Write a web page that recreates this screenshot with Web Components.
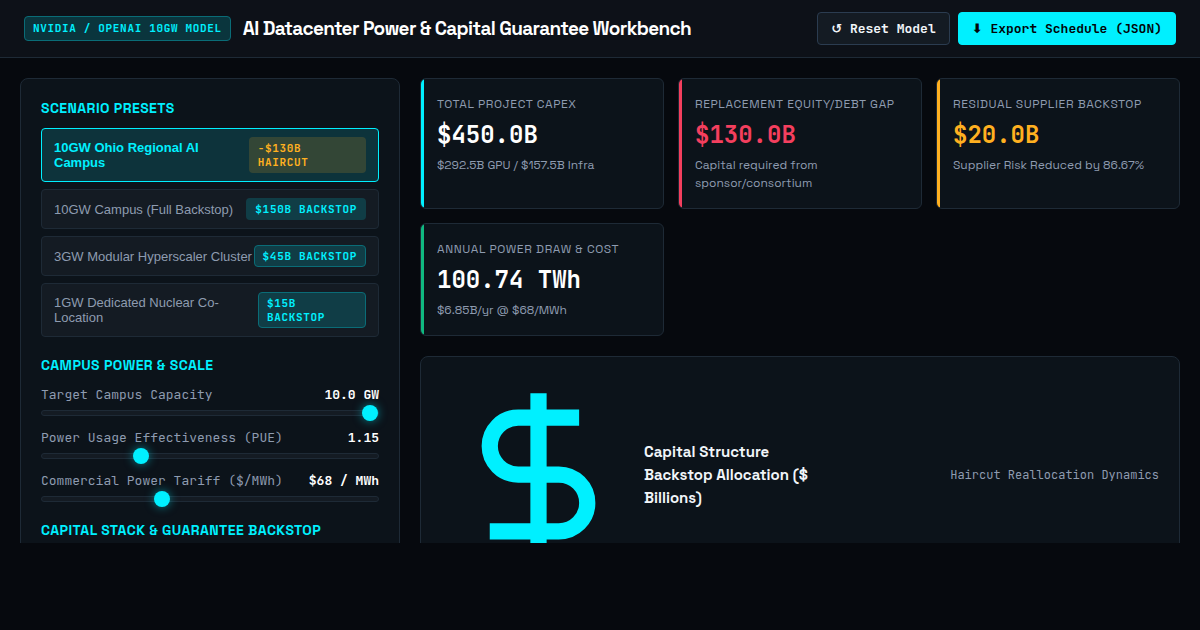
<!DOCTYPE html>
<html lang="en">
<head>
<meta charset="utf-8">
<meta name="viewport" content="width=device-width, initial-scale=1">
<title>AI Datacenter Power &amp; Capital Guarantee Workbench</title>
<style>
:root {
  --bg: #06090e;
  --header: #0d1118;
  --panel: #0c131a;
  --raised: #141b23;
  --line: #1e2a36;
  --line-strong: #2b3c50;
  --text: #f1f5f9;
  --muted: #8e9bb0;
  --cyan: #00f0ff;
  --red: #f43f5e;
  --amber: #ffb020;
  --green: #10b981;
  --sans: "Space Grotesk", Inter, sans-serif;
  --mono: "JetBrains Mono", "DejaVu Sans", monospace;
}
body { margin: 0; background: var(--bg); color: var(--text); font-family: var(--sans); }
</style>
</head>
<body>
<workbench-app>
  <app-header slot="header">
    <model-badge slot="brand">NVIDIA / OPENAI 10GW MODEL</model-badge>
    <span slot="title">AI Datacenter Power &amp; Capital Guarantee Workbench</span>
    <action-button slot="actions">↺ Reset Model</action-button>
    <action-button slot="actions" primary>⬇ Export Schedule (JSON)</action-button>
  </app-header>
  <side-panel slot="side">
    <panel-section>
      <span slot="heading">SCENARIO PRESETS</span>
      <preset-list>
        <preset-option active>10GW Ohio Regional AI Campus<model-badge slot="tag" tone="amber">-$130B HAIRCUT</model-badge></preset-option>
        <preset-option>10GW Campus (Full Backstop)<model-badge slot="tag" tone="plain">$150B BACKSTOP</model-badge></preset-option>
        <preset-option>3GW Modular Hyperscaler Cluster<model-badge slot="tag">$45B BACKSTOP</model-badge></preset-option>
        <preset-option>1GW Dedicated Nuclear Co-Location<model-badge slot="tag">$15B BACKSTOP</model-badge></preset-option>
      </preset-list>
    </panel-section>
    <panel-section>
      <span slot="heading">CAMPUS POWER &amp; SCALE</span>
      <range-field label="Target Campus Capacity" display="10.0 GW" min="1" max="10" step="0.5" value="10"></range-field>
      <range-field label="Power Usage Effectiveness (PUE)" display="1.15" min="1.05" max="1.4" step="0.01" value="1.15"></range-field>
      <range-field label="Commercial Power Tariff ($/MWh)" display="$68 / MWh" min="40" max="120" step="1" value="68"></range-field>
    </panel-section>
    <panel-section>
      <span slot="heading">CAPITAL STACK &amp; GUARANTEE BACKSTOP</span>
    </panel-section>
  </side-panel>
  <kpi-grid slot="main">
    <kpi-card tone="cyan"><span slot="label">TOTAL PROJECT CAPEX</span>$450.0B<span slot="note">$292.5B GPU / $157.5B Infra</span></kpi-card>
    <kpi-card tone="red"><span slot="label">REPLACEMENT EQUITY/DEBT GAP</span>$130.0B<span slot="note">Capital required from sponsor/consortium</span></kpi-card>
    <kpi-card tone="amber"><span slot="label">RESIDUAL SUPPLIER BACKSTOP</span>$20.0B<span slot="note">Supplier Risk Reduced by 86.67%</span></kpi-card>
    <kpi-card tone="green"><span slot="label">ANNUAL POWER DRAW &amp; COST</span>100.74 TWh<span slot="note">$6.85B/yr @ $68/MWh</span></kpi-card>
  </kpi-grid>
  <chart-card slot="main">
    <span slot="title">Capital Structure Backstop Allocation ($ Billions)</span>
    <span slot="note">Haircut Reallocation Dynamics</span>
  </chart-card>
</workbench-app>

<script>
const component = (name, render, setup) => customElements.define(name, class extends HTMLElement {
  connectedCallback() {
    if (this.shadowRoot) return;
    const template = document.createElement('template');
    template.innerHTML = render(this);
    this.attachShadow({ mode: 'open' }).append(template.content.cloneNode(true));
    if (setup) setup(this);
  }
});

component('workbench-app', () => `
<style>
  :host { display: flex; flex-direction: column; height: 100vh; box-sizing: border-box; padding-bottom: 87px; }
  main { flex: 1; min-height: 0; overflow-y: auto; scrollbar-width: none;
    display: grid; grid-template-columns: 380px minmax(0, 1fr); align-items: start; gap: 20px; padding: 20px 20px 0; }
  section { display: flex; flex-direction: column; gap: 20px; }
</style>
<slot name="header"></slot>
<main><slot name="side"></slot><section><slot name="main"></slot></section></main>`);

component('app-header', () => `
<style>
  :host { display: block; flex: none; }
  header { display: flex; align-items: center; justify-content: space-between; gap: 16px;
    padding: 12px 24px; background: var(--header); border-bottom: 1px solid var(--line); }
  div { display: flex; align-items: center; gap: 12px; }
  nav { display: flex; gap: 8px; }
  h1 { margin: 0; font-size: 19px; line-height: 28px; font-weight: 700; letter-spacing: -0.035em; color: #fff; }
</style>
<header><div><slot name="brand"></slot><h1><slot name="title"></slot></h1></div><nav><slot name="actions"></slot></nav></header>`);

component('model-badge', () => `
<style>
  :host { display: block; box-sizing: border-box; padding: 3px 8px; border: 1px solid #0a6c77; border-radius: 4px;
    background: rgba(0, 240, 255, 0.16); color: var(--cyan);
    font: 700 11px/var(--badge-line, 17px) var(--mono); letter-spacing: 0.06em; text-align: left; }
  :host([tone="plain"]) { border-color: transparent; }
  :host([tone="amber"]) { border-color: transparent; background: rgba(255, 176, 32, 0.16); color: var(--amber); }
</style>
<slot></slot>`);

component('action-button', () => `
<style>
  :host { display: block; }
  button { display: block; padding: 7px 13px; border: 1px solid var(--line-strong); border-radius: 4px;
    background: var(--raised); color: var(--text); font: 700 13px/17px var(--mono); white-space: nowrap; cursor: pointer; }
  :host([primary]) button { background: var(--cyan); border-color: var(--cyan); color: #020508; }
</style>
<button type="button"><slot></slot></button>`);

component('side-panel', () => `
<style>
  :host { display: flex; flex-direction: column; gap: 19px; box-sizing: border-box; padding: 20px;
    background: var(--panel); border: 1px solid var(--line); border-radius: 8px; }
</style>
<slot></slot>`);

component('panel-section', () => `
<style>
  :host { display: flex; flex-direction: column; gap: 12px; }
  h2 { margin: 0 0 -2px; font-size: 14px; line-height: 19px; font-weight: 700; letter-spacing: 0.03em; color: var(--cyan); }
</style>
<h2><slot name="heading"></slot></h2><slot></slot>`);

component('preset-list', () => `
<style>:host { display: flex; flex-direction: column; gap: 7px; }</style>
<slot></slot>`);

component('preset-option', () => `
<style>
  :host { display: block; --badge-line: 14px; }
  button { display: flex; align-items: center; justify-content: space-between; width: 100%; padding: 8px 12px;
    border: 1px solid var(--line); border-radius: 4px; background: var(--raised); color: var(--muted);
    font: 13px/15px "Liberation Sans", Arial, sans-serif; text-align: left; cursor: pointer; }
  :host([active]) button { border-color: var(--cyan); background: #0d333b; color: var(--cyan); font-weight: 700; }
</style>
<button type="button"><span><slot></slot></span><slot name="tag"></slot></button>`);

component('range-field', el => `
<style>
  :host { display: flex; flex-direction: column; gap: 6px; }
  div { display: flex; justify-content: space-between; font: 13px/19px var(--mono); color: var(--muted); }
  output { color: #fff; font-weight: 700; }
  input { appearance: none; display: block; box-sizing: border-box; width: 100%; height: 6px; margin: 0;
    border: 1px solid var(--line); border-radius: 3px; background: var(--raised); }
  input::-webkit-slider-thumb { appearance: none; width: 16px; height: 16px; border-radius: 50%;
    background: var(--cyan); box-shadow: 0 0 10px rgba(0, 240, 255, 0.5); }
</style>
<div><label for="range">${el.getAttribute('label')}</label><output for="range">${el.getAttribute('display')}</output></div>
<input id="range" type="range">`, el => {
  const input = el.shadowRoot.querySelector('input');
  for (const key of ['min', 'max', 'step', 'value']) input[key] = el.getAttribute(key);
});

component('kpi-grid', () => `
<style>:host { display: grid; grid-template-columns: repeat(auto-fill, minmax(220px, 1fr)); gap: 14px; }</style>
<slot></slot>`);

component('kpi-card', () => `
<style>
  :host { display: block; position: relative; overflow: hidden; box-sizing: border-box; padding: 16px;
    background: var(--panel); border: 1px solid var(--line); border-radius: 6px; --value: #fff; }
  :host([tone="cyan"]) { --accent: var(--cyan); }
  :host([tone="red"]) { --accent: var(--red); --value: var(--red); }
  :host([tone="amber"]) { --accent: var(--amber); --value: var(--amber); }
  :host([tone="green"]) { --accent: var(--green); }
  :host::before { content: ""; position: absolute; inset: 0 auto 0 0; width: 3px; background: var(--accent); }
  .label { font-size: 12px; line-height: 18px; letter-spacing: 0.05em; color: var(--muted); }
  .value { margin: 4px 0 3px; font: 700 24px/36px var(--mono); color: var(--value); }
  .note { font-size: 12px; line-height: 18px; color: var(--muted); }
</style>
<div class="label"><slot name="label"></slot></div>
<div class="value"><slot></slot></div>
<div class="note"><slot name="note"></slot></div>`);

component('chart-card', () => `
<style>
  :host { display: block; box-sizing: border-box; padding: 20px; background: var(--panel);
    border: 1px solid var(--line); border-radius: 8px; }
  header { display: flex; align-items: center; justify-content: space-between; gap: 20px; }
  div { display: flex; align-items: center; gap: 8px; }
  svg { flex: none; width: 195px; height: 195px; fill: none; stroke: var(--cyan); stroke-width: 2; }
  h3 { margin: 0; max-width: 180px; font-size: 15px; line-height: 23px; font-weight: 700; }
  p { margin: 0; font: 12px/18px var(--mono); color: var(--muted); }
</style>
<header>
  <div>
    <svg viewBox="0 0 24 24" aria-hidden="true"><path d="M12 2v20M17 5H9.5a3.5 3.5 0 0 0 0 7h5a3.5 3.5 0 0 1 0 7H6"/></svg>
    <h3><slot name="title"></slot></h3>
  </div>
  <p><slot name="note"></slot></p>
</header>`);
</script>
</body>
</html>
